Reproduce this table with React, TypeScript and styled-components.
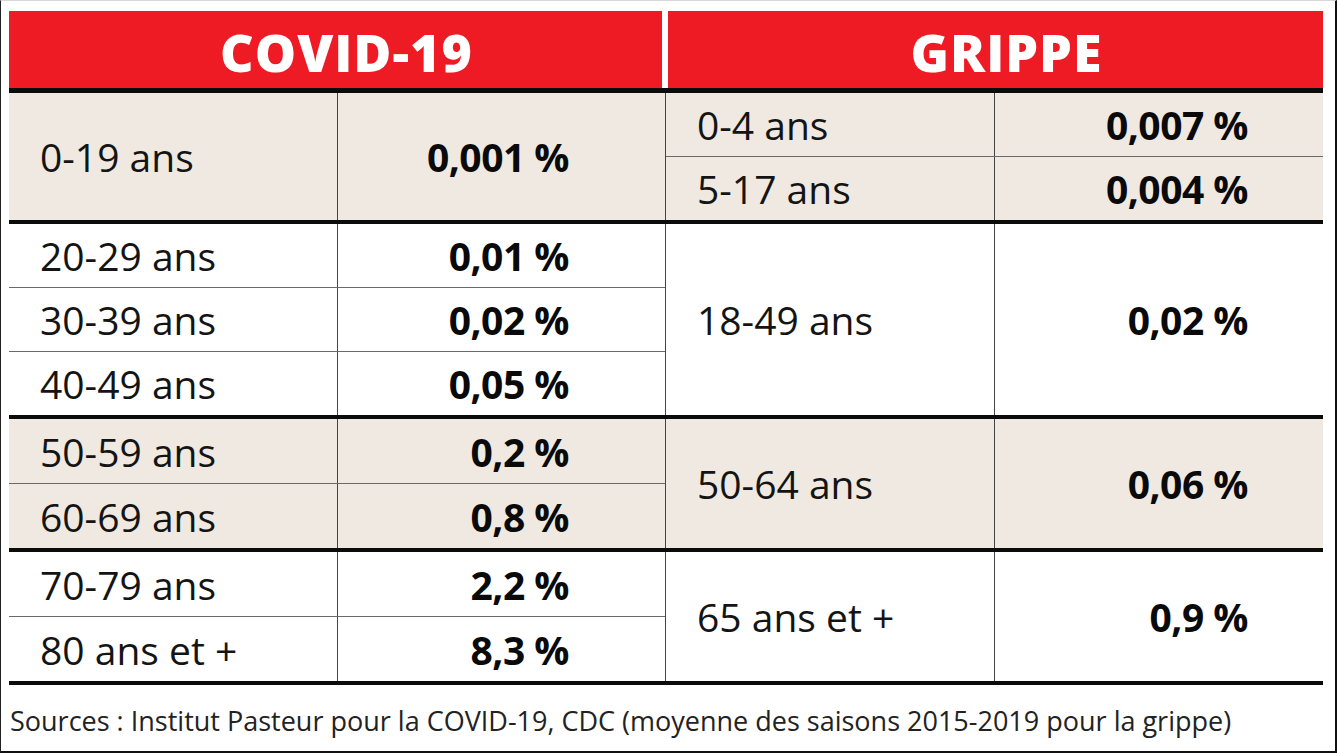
import React from 'react';
import styled, { createGlobalStyle } from 'styled-components';

const GlobalStyle = createGlobalStyle`
  html, body {
    margin: 0;
    padding: 0;
    background: #ffffff;
  }
  body {
    font-family: "Open Sans", "Liberation Sans", sans-serif;
    color: #111;
  }
`;

const Frame = styled.div`
  box-sizing: border-box;
  width: 1337px;
  height: 753px;
  border-top: 1px solid #d8d8d8;
  border-left: 1px solid #222;
  border-right: 2px solid #111;
  border-bottom: 2px solid #111;
  padding: 10px 12px 0 8px;
  display: flex;
  flex-direction: column;
`;

const Table = styled.div`
  width: 1314px;
  display: flex;
  flex-direction: column;
`;

const HeaderRow = styled.div`
  display: grid;
  grid-template-columns: 653px 655px;
  column-gap: 6px;
  border-bottom: 5px solid #0b0b0b;
`;

const HeaderCell = styled.div`
  height: 77px;
  background: #ee1b24;
  color: #fff;
  font-family: "Open Sans", "Liberation Sans", sans-serif;
  font-weight: 800;
  font-size: 52px;
  letter-spacing: 1px;
  display: flex;
  align-items: center;
  justify-content: center;
  line-height: 1;
  padding: 5px 0 0 22px;
  box-sizing: border-box;
`;

const Group = styled.div<{ $h: number; $shade?: boolean }>`
  display: grid;
  grid-template-columns: 656px 658px;
  height: ${p => p.$h}px;
  background: ${p => (p.$shade ? '#efe9e1' : '#ffffff')};
  border-bottom: 4px solid #0b0b0b;
`;

const Block = styled.div<{ $side: 'left' | 'right' }>`
  display: flex;
  flex-direction: column;
  border-left: ${p => (p.$side === 'right' ? '1px solid #444' : 'none')};
`;

const Row = styled.div`
  flex: 1;
  display: grid;
  grid-template-columns: 328px 1fr;
  & + & {
    border-top: 1px solid #6a6a6a;
  }
`;

const Label = styled.div<{ $pad: number }>`
  display: flex;
  align-items: center;
  padding-left: ${p => p.$pad}px;
  font-size: 39px;
  font-weight: 400;
  color: #141414;
  white-space: nowrap;
`;

const Value = styled.div<{ $pad: number }>`
  display: flex;
  align-items: center;
  justify-content: flex-end;
  padding-right: ${p => p.$pad}px;
  border-left: 1px solid #444;
  font-size: 39px;
  font-weight: 700;
  color: #0a0a0a;
  white-space: nowrap;
  letter-spacing: -0.5px;
`;

const Footer = styled.div`
  padding: 17px 0 0 1px;
  font-size: 27px;
  color: #222;
  white-space: nowrap;
`;

type Line = [string, string];
type GroupData = { h: number; shade: boolean; left: Line[]; right: Line[] };

const groups: GroupData[] = [
  {
    h: 127,
    shade: true,
    left: [['0-19 ans', '0,001 %']],
    right: [
      ['0-4 ans', '0,007 %'],
      ['5-17 ans', '0,004 %'],
    ],
  },
  {
    h: 191,
    shade: false,
    left: [
      ['20-29 ans', '0,01 %'],
      ['30-39 ans', '0,02 %'],
      ['40-49 ans', '0,05 %'],
    ],
    right: [['18-49 ans', '0,02 %']],
  },
  {
    h: 129,
    shade: true,
    left: [
      ['50-59 ans', '0,2 %'],
      ['60-69 ans', '0,8 %'],
    ],
    right: [['50-64 ans', '0,06 %']],
  },
  {
    h: 129,
    shade: false,
    left: [
      ['70-79 ans', '2,2 %'],
      ['80 ans et +', '8,3 %'],
    ],
    right: [['65 ans et +', '0,9 %']],
  },
];

export default function App() {
  return (
    <>
      <GlobalStyle />
      <Frame>
        <Table>
          <HeaderRow>
            <HeaderCell>COVID-19</HeaderCell>
            <HeaderCell>GRIPPE</HeaderCell>
          </HeaderRow>
          {groups.map((g, i) => (
            <Group key={i} $h={g.h} $shade={g.shade}>
              <Block $side="left">
                {g.left.map(([a, b]) => (
                  <Row key={a}>
                    <Label $pad={31}>{a}</Label>
                    <Value $pad={96}>{b}</Value>
                  </Row>
                ))}
              </Block>
              <Block $side="right">
                {g.right.map(([a, b]) => (
                  <Row key={a}>
                    <Label $pad={31}>{a}</Label>
                    <Value $pad={75}>{b}</Value>
                  </Row>
                ))}
              </Block>
            </Group>
          ))}
        </Table>
        <Footer>
          Sources : Institut Pasteur pour la COVID-19, CDC (moyenne des saisons 2015-2019 pour la grippe)
        </Footer>
      </Frame>
    </>
  );
}
